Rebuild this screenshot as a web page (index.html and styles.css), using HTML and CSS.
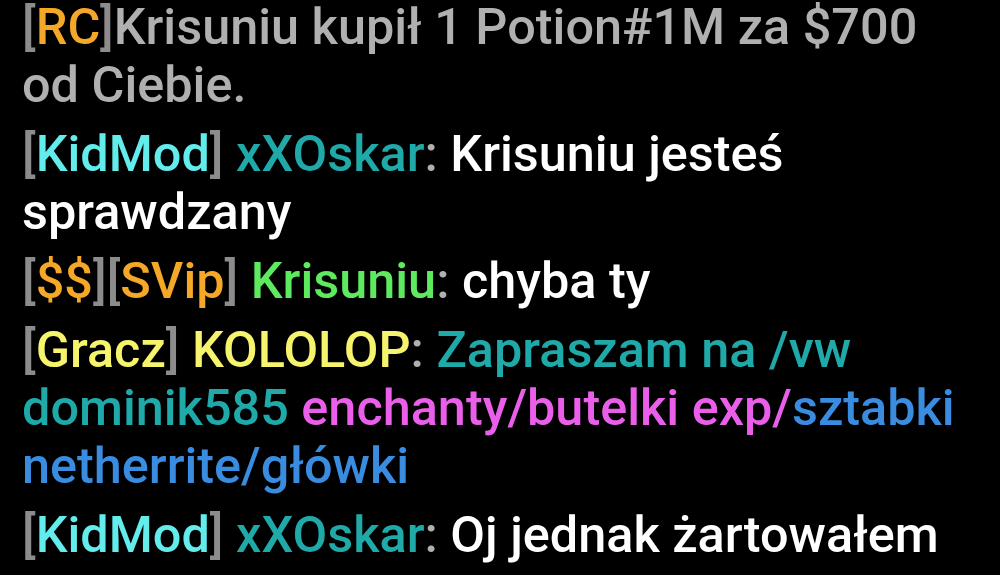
FILE: index.html
```html
<!DOCTYPE html>
<html lang="pl">
<head>
<meta charset="utf-8">
<title>Chat</title>
<link rel="stylesheet" href="styles.css">
</head>
<body>
<div class="chat">
  <p class="msg"><span class="br">[</span><span class="gold">RC</span><span class="br">]</span><span class="gray">Krisuniu kupił 1 Potion#1M za $700 od Ciebie.</span></p>
  <p class="msg"><span class="br">[</span><span class="aqua">KidMod</span><span class="br">]</span> <span class="daqua">xXOskar</span><span class="gray">:</span> <span class="white">Krisuniu jesteś sprawdzany</span></p>
  <p class="msg"><span class="br">[</span><span class="gold">$$</span><span class="br">][</span><span class="gold">SVip</span><span class="br">]</span> <span class="green">Krisuniu</span><span class="gray">:</span> <span class="white">chyba ty</span></p>
  <p class="msg"><span class="br">[</span><span class="yellow">Gracz</span><span class="br">]</span> <span class="yellow">KOLOLOP</span><span class="gray">:</span> <span class="daqua">Zapraszam na /vw dominik585</span> <span class="pink">enchanty/butelki exp/</span><span class="blue">sztabki netherrite/główki</span></p>
  <p class="msg"><span class="br">[</span><span class="aqua">KidMod</span><span class="br">]</span> <span class="daqua">xXOskar</span><span class="gray">:</span> <span class="white">Oj jednak żartowałem</span></p>
</div>
</body>
</html>
```
FILE: styles.css
```css
html, body {
  margin: 0;
  padding: 0;
  background: #000;
}
body {
  width: 1000px;
  height: 575px;
  overflow: hidden;
}
.chat {
  display: flex;
  flex-direction: column;
  gap: 11px;
  width: 948px;
  padding: 0 0 0 22px;
  margin-top: -2px;
  font-family: Roboto, "Liberation Sans", sans-serif;
  font-size: 50.4px;
  line-height: 58px;
  font-weight: 500;
}
.msg {
  margin: 0;
}
.br { color: #8c8c8c; }
.gray { color: #b0b0b0; }
.gold { color: #f5a828; }
.aqua { color: #62ecec; }
.daqua { color: #1fa9a9; }
.white { color: #ffffff; }
.green { color: #5eea5e; }
.yellow { color: #f6f36c; }
.pink { color: #ea5fea; }
.blue { color: #3a8ce0; }
```
